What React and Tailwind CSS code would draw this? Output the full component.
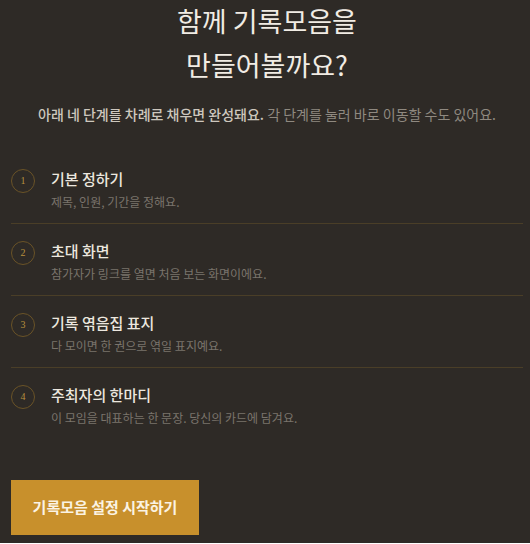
import React from 'react';

const steps = [
  { n: '1', title: '기본 정하기', desc: '제목, 인원, 기간을 정해요.' },
  { n: '2', title: '초대 화면', desc: '참가자가 링크를 열면 처음 보는 화면이에요.' },
  { n: '3', title: '기록 엮음집 표지', desc: '다 모이면 한 권으로 엮일 표지예요.' },
  { n: '4', title: '주최자의 한마디', desc: '이 모임을 대표하는 한 문장. 당신의 카드에 담겨요.' },
];

const kr = { fontFamily: '"Noto Sans CJK KR", "Noto Sans", sans-serif' };

export default function App() {
  return (
    <div className="min-h-screen w-full bg-[#2e2a26] pl-[11px] pr-[7px]" style={kr}>
      {/* Header */}
      <div className="text-center">
        <h1 className="-mt-px text-[27px] leading-[44px] font-normal text-[#f1ece4]">
          함께 기록모음을
          <br />
          만들어볼까요?
        </h1>
        <p className="mt-[17px] text-[14px] leading-5 text-[#8f8980]">
          <span className="font-medium text-[#cdc7bd]">아래 네 단계를 차례로 채우면 완성돼요.</span> 각 단계를 눌러 바로 이동할 수도 있어요.
        </p>
      </div>

      {/* Steps */}
      <ul className="mt-[28px]">
        {steps.map((s, i) => (
          <li
            key={s.n}
            className={`flex items-start gap-4 pt-4 pb-3 ${i < steps.length - 1 ? 'border-b border-[#4a3e27]' : ''}`}
          >
            <div className="mt-px flex h-6 w-6 shrink-0 items-center justify-center rounded-full border border-[#6a5326]">
              <span className="text-[10px] leading-none text-[#b8913e]" style={{ fontFamily: '"Liberation Serif", serif' }}>
                {s.n}
              </span>
            </div>
            <div>
              <div className="text-[15px] leading-[22px] font-medium text-[#ece7df]">{s.title}</div>
              <div className="mt-[3px] text-xs leading-[18px] text-[#7a746c]">{s.desc}</div>
            </div>
          </li>
        ))}
      </ul>

      {/* CTA */}
      <button className="mt-[41px] h-[55px] w-[188px] bg-[#c8902c] text-[15px] font-semibold text-[#fbf3e3]">
        기록모음 설정 시작하기
      </button>
    </div>
  );
}
